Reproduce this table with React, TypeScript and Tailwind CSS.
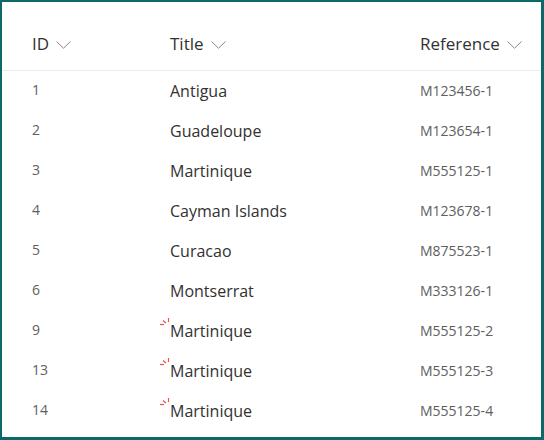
import React from 'react';

const rows = [
  { id: '1', title: 'Antigua', ref: 'M123456-1' },
  { id: '2', title: 'Guadeloupe', ref: 'M123654-1' },
  { id: '3', title: 'Martinique', ref: 'M555125-1' },
  { id: '4', title: 'Cayman Islands', ref: 'M123678-1' },
  { id: '5', title: 'Curacao', ref: 'M875523-1' },
  { id: '6', title: 'Montserrat', ref: 'M333126-1' },
  { id: '9', title: 'Martinique', ref: 'M555125-2', isNew: true },
  { id: '13', title: 'Martinique', ref: 'M555125-3', isNew: true },
  { id: '14', title: 'Martinique', ref: 'M555125-4', isNew: true },
];

const Chevron = () => (
  <svg width="15" height="8" viewBox="0 0 15 8" className="ml-[7px] mt-[1px]">
    <path d="M0.5 0.5 L7.5 7.2 L14.5 0.5" fill="none" stroke="#8a8886" strokeWidth="1" />
  </svg>
);

const NewMark = () => (
  <svg width="11" height="10" viewBox="0 0 11 10" className="absolute left-[-10px] top-[-2px]">
    <path d="M0 6.5 H4" stroke="#f0504a" strokeWidth="1.2" />
    <path d="M3 2.5 L6 5" stroke="#f0504a" strokeWidth="1.2" />
    <path d="M8.5 0 V4" stroke="#f0504a" strokeWidth="1.2" />
  </svg>
);

export default function App() {
  return (
    <div className="w-[544px] h-[440px] bg-white border-2 border-r-[3px] border-b-[3px] border-[#0b6a67] font-['Segoe_UI','Open_Sans',sans-serif] overflow-hidden">
      {/* header */}
      <div className="flex h-[69px] items-center border-b border-[#edebe9] text-[17px] text-[#323130] pt-[16px]">
        <div className="w-[168px] pl-[30px] flex items-center">ID<Chevron /></div>
        <div className="w-[250px] flex items-center">Title<Chevron /></div>
        <div className="flex items-center">Reference<Chevron /></div>
      </div>

      {rows.map((r) => (
        <div key={r.id} className="flex h-[40px] items-center">
          <div className="w-[168px] pl-[30px] text-[14px] text-[#605e5c] -mt-[3px]">{r.id}</div>
          <div className="w-[250px] text-[16px] text-[#323130]">
            <span className="relative">
              {r.isNew && <NewMark />}
              {r.title}
            </span>
          </div>
          <div className="text-[14px] text-[#605e5c] -mt-[2px]">{r.ref}</div>
        </div>
      ))}
    </div>
  );
}
